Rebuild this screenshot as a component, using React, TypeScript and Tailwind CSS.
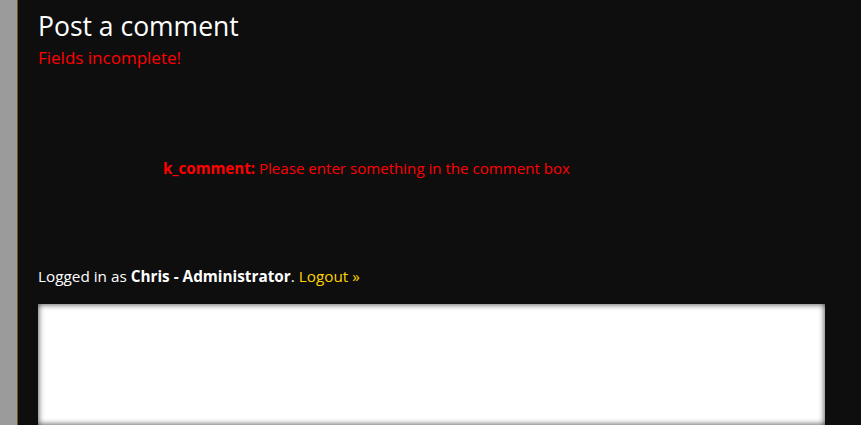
import React from "react";

export default function App() {
  return (
    <div
      className="flex h-[425px] w-[861px] overflow-hidden bg-[#0e0e0e]"
      style={{ fontFamily: '"Open Sans", "Noto Sans", sans-serif' }}
    >
      <div className="w-[17px] shrink-0 bg-[#9b9b9b]" />
      <div className="w-px shrink-0 bg-[#6b5521]" />
      <div className="flex flex-1 flex-col pl-[20px] pr-[36px] pt-[8px]">
        <h2 className="text-[26.5px] leading-[36px] text-white">Post a comment</h2>
        <p className="text-[17px] leading-[22px] text-[#ff0000] mt-[3px]">Fields incomplete!</p>
        <p className="mt-[89px] ml-[125px] text-[15.1px] leading-[20px] text-[#ff0000]">
          <b>k_comment:</b> Please enter something in the comment box
        </p>
        <p className="mt-[88px] text-[15.3px] leading-[20px] text-white">
          Logged in as <b>Chris - Administrator</b>.{" "}
          <a className="text-[#ffd200]">Logout »</a>
        </p>
        <div className="mt-[18px] h-[140px] bg-white shadow-[inset_0_0_6px_rgba(0,0,0,0.8)]" />
      </div>
    </div>
  );
}
